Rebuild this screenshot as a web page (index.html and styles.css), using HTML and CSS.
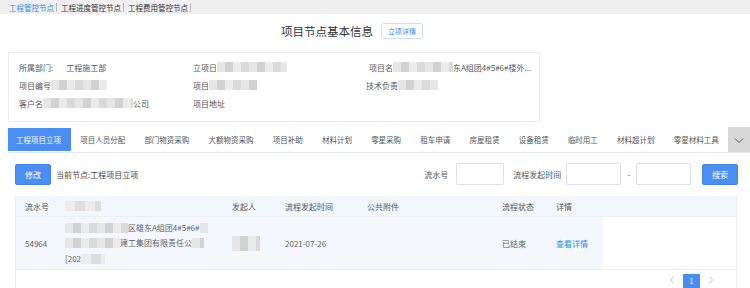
FILE: index.html
```html
<!DOCTYPE html>
<html lang="zh-CN">
<head>
  <meta charset="UTF-8">
  <title>项目节点基本信息</title>
  <link rel="stylesheet" href="styles.css">
</head>
<body>
  <div class="topnav">
    <a class="active">工程管控节点</a>
    <a>工程进度管控节点</a>
    <a>工程费用管控节点</a>
  </div>

  <div class="title-row">
    <span class="title">项目节点基本信息</span>
    <span class="btn-outline">立项详情</span>
  </div>

  <div class="info">
    <div class="cell"><span>所属部门:</span><span class="value">工程施工部</span></div>
    <div class="cell"><span>立项日</span><span class="mosaic w70"></span></div>
    <div class="cell c3"><span>项目名</span><span class="mosaic w60"></span><span>东A组团4#5#6#楼外...</span></div>
    <div class="cell"><span>项目编号</span><span class="mosaic w56"></span></div>
    <div class="cell"><span>项目</span><span class="mosaic w48"></span></div>
    <div class="cell"><span>技术负责</span><span class="mosaic w40"></span></div>
    <div class="cell"><span>客户名</span><span class="mosaic w90"></span><span>公司</span></div>
    <div class="cell"><span>项目地址</span></div>
  </div>

  <div class="tabs">
    <div class="tab-list">
      <span class="tab active">工程项目立项</span>
      <span class="tab">项目人员分配</span>
      <span class="tab">部门物资采购</span>
      <span class="tab">大额物资采购</span>
      <span class="tab">项目补助</span>
      <span class="tab">材料计划</span>
      <span class="tab">零星采购</span>
      <span class="tab">租车申请</span>
      <span class="tab">房屋租赁</span>
      <span class="tab">设备租赁</span>
      <span class="tab">临时用工</span>
      <span class="tab">材料超计划</span>
      <span class="tab">零星材料工具</span>
    </div>
    <span class="tab-more">
      <svg width="12" height="12" viewBox="0 0 12 12"><polyline points="2,4.5 6,8.5 10,4.5" fill="none" stroke="#555" stroke-width="1"/></svg>
    </span>
  </div>

  <div class="toolbar">
    <span class="btn">修改</span>
    <span class="node">当前节点:工程项目立项</span>
    <div class="search">
      <span>流水号</span>
      <span class="input"></span>
      <span class="label">流程发起时间</span>
      <span class="input date"></span>
      <span class="dash">-</span>
      <span class="input date nomargin"></span>
      <span class="btn search-btn">搜索</span>
    </div>
  </div>

  <div class="table">
    <div class="grid head">
      <div>流水号</div>
      <div><span class="mosaic w36 light"></span></div>
      <div>发起人</div>
      <div>流程发起时间</div>
      <div>公共附件</div>
      <div>流程状态</div>
      <div>详情</div>
      <div></div>
    </div>
    <div class="grid body">
      <div>54964</div>
      <div class="multi">
        <div><span class="mosaic w63"></span>区雄东A组团4#5#6#<span class="mosaic w8"></span></div>
        <div><span class="mosaic w55"></span>建工集团有限责任公<span class="mosaic w12"></span></div>
        <div>[202<span class="mosaic w24 light"></span></div>
      </div>
      <div><span class="mosaic w28 tall"></span></div>
      <div>2021-07-26</div>
      <div></div>
      <div>已结束</div>
      <div class="link">查看详情</div>
      <div class="blank"></div>
    </div>
    <div class="pager">
      <svg width="8" height="10" viewBox="0 0 8 10"><polyline points="5.5,1.5 2.5,5 5.5,8.5" fill="none" stroke="#c0c4cc" stroke-width="1"/></svg>
      <span class="page">1</span>
      <svg width="8" height="10" viewBox="0 0 8 10"><polyline points="2.5,1.5 5.5,5 2.5,8.5" fill="none" stroke="#c0c4cc" stroke-width="1"/></svg>
    </div>
  </div>
</body>
</html>
```

FILE: styles.css
```css
body {
  margin: 0;
  font-family: "Noto Sans CJK SC", "Noto Sans", sans-serif;
  font-size: 8px;
  color: #606266;
  background: #fff;
  overflow: hidden;
}
.topnav {
  height: 14px;
  background: #f0f0f0;
  display: flex;
  align-items: center;
  padding-left: 9px;
}
.topnav a {
  font-size: 7.5px;
  line-height: 9px;
  color: #333;
  padding-right: 2px;
  margin-right: 4px;
  border-right: 1px solid #b5b5b5;
}
.topnav a.active {
  color: #2d8cf0;
}
.title-row {
  height: 38px;
  display: flex;
  align-items: center;
  padding-left: 281px;
  box-sizing: border-box;
  padding-bottom: 4px;
}
.title {
  font-size: 11.5px;
  color: #333;
}
.btn-outline {
  margin-left: 8px;
  font-size: 7px;
  color: #2d8cf0;
  border: 1px solid #cfdff3;
  border-radius: 3px;
  padding: 0 6px;
  height: 14px;
  line-height: 14px;
}
.info {
  margin-left: 8px;
  width: 532px;
  height: 70px;
  box-sizing: border-box;
  border: 1px solid #ececec;
  display: grid;
  grid-template-columns: 174px 173px 1fr;
  grid-auto-rows: 18px;
  padding: 5px 0 0 10px;
  color: #555;
}
.cell {
  display: flex;
  align-items: center;
  white-space: nowrap;
}
.cell.c3 {
  margin-left: 3px;
}
.value {
  margin-left: 13px;
}
.mosaic {
  display: inline-block;
  height: 10px;
  vertical-align: middle;
  background: linear-gradient(90deg, #e6e6e6 0 25%, #d2d2d2 25% 50%, #ebebeb 50% 75%, #dadada 75%);
  background-size: 32px 100%;
}
.mosaic.light {
  background: linear-gradient(90deg, #ececec 0 50%, #dedede 50%);
  background-size: 20px 100%;
}
.mosaic.tall {
  height: 15px;
}
.w8 { width: 8px; }
.w12 { width: 12px; }
.w24 { width: 24px; }
.w28 { width: 28px; }
.w36 { width: 36px; }
.w40 { width: 40px; }
.w48 { width: 48px; }
.w55 { width: 55px; }
.w56 { width: 56px; }
.w60 { width: 60px; }
.w63 { width: 63px; }
.w70 { width: 70px; }
.w90 { width: 90px; }
.tabs {
  margin-top: 5px;
  margin-left: 8px;
  height: 25px;
  display: flex;
  border-bottom: 1px solid #e4e7ed;
}
.tab-list {
  flex: 1;
  display: flex;
  overflow: hidden;
  padding-top: 1px;
}
.tab {
  padding: 0 9.6px;
  height: 23px;
  line-height: 23px;
  font-size: 7.5px;
  white-space: nowrap;
  color: #555;
}
.tab.active {
  background: #4b8ef3;
  color: #fff;
  padding-left: 8px;
}
.tab-more {
  width: 22px;
  background: #d7d7d7;
  display: flex;
  align-items: center;
  justify-content: center;
}
.toolbar {
  margin-top: 10px;
  height: 22px;
  display: flex;
  align-items: center;
  padding: 0 12px 0 15px;
}
.btn {
  height: 21px;
  width: 36px;
  box-sizing: border-box;
  background: #4b8ef3;
  border: 1px solid #3f85ee;
  border-radius: 2px;
  color: #fff;
  display: flex;
  align-items: center;
  justify-content: center;
}
.node {
  margin-left: 5px;
  color: #444;
}
.search {
  margin-left: auto;
  display: flex;
  align-items: center;
  color: #555;
}
.input {
  width: 48px;
  height: 22px;
  box-sizing: border-box;
  border: 1px solid #dcdfe6;
  border-radius: 2px;
  margin-left: 8px;
}
.input.date {
  width: 55px;
  margin-left: 5px;
}
.input.nomargin {
  margin-left: 0;
}
.label {
  margin-left: 9px;
}
.dash {
  margin: 0 6px;
}
.search-btn {
  margin-left: 11px;
}
.table {
  margin: 11px 0 0 15px;
  width: 722px;
  border-left: 1px solid #ebeef5;
  border-right: 1px solid #ebeef5;
  box-sizing: border-box;
}
.grid {
  display: grid;
  grid-template-columns: 40px 167px 53px 82px 135px 54px 56px 1fr;
}
.grid > div {
  padding-left: 9px;
  display: flex;
  align-items: center;
  white-space: nowrap;
}
.head {
  height: 20px;
  background: #f2f7fd;
  color: #555;
  border-bottom: 1px solid #ebeef5;
}
.body {
  height: 52px;
  border-bottom: 1px solid #ebeef5;
}
.body > div {
  background: #f4f8fe;
}
.body > div.blank {
  background: #fff;
}
.body > div.multi {
  flex-direction: column;
  align-items: flex-start;
  justify-content: center;
  line-height: 15.5px;
}
.multi > div {
  display: flex;
  align-items: center;
}
.link {
  color: #2d8cf0;
}
.pager {
  height: 19px;
  display: flex;
  align-items: center;
  justify-content: flex-end;
  gap: 7px;
  padding-right: 21px;
}
.page {
  width: 17px;
  height: 14px;
  background: #4b8ef3;
  color: #fff;
  font-size: 7px;
  display: flex;
  align-items: center;
  justify-content: center;
  margin-top: 3px;
}
```
